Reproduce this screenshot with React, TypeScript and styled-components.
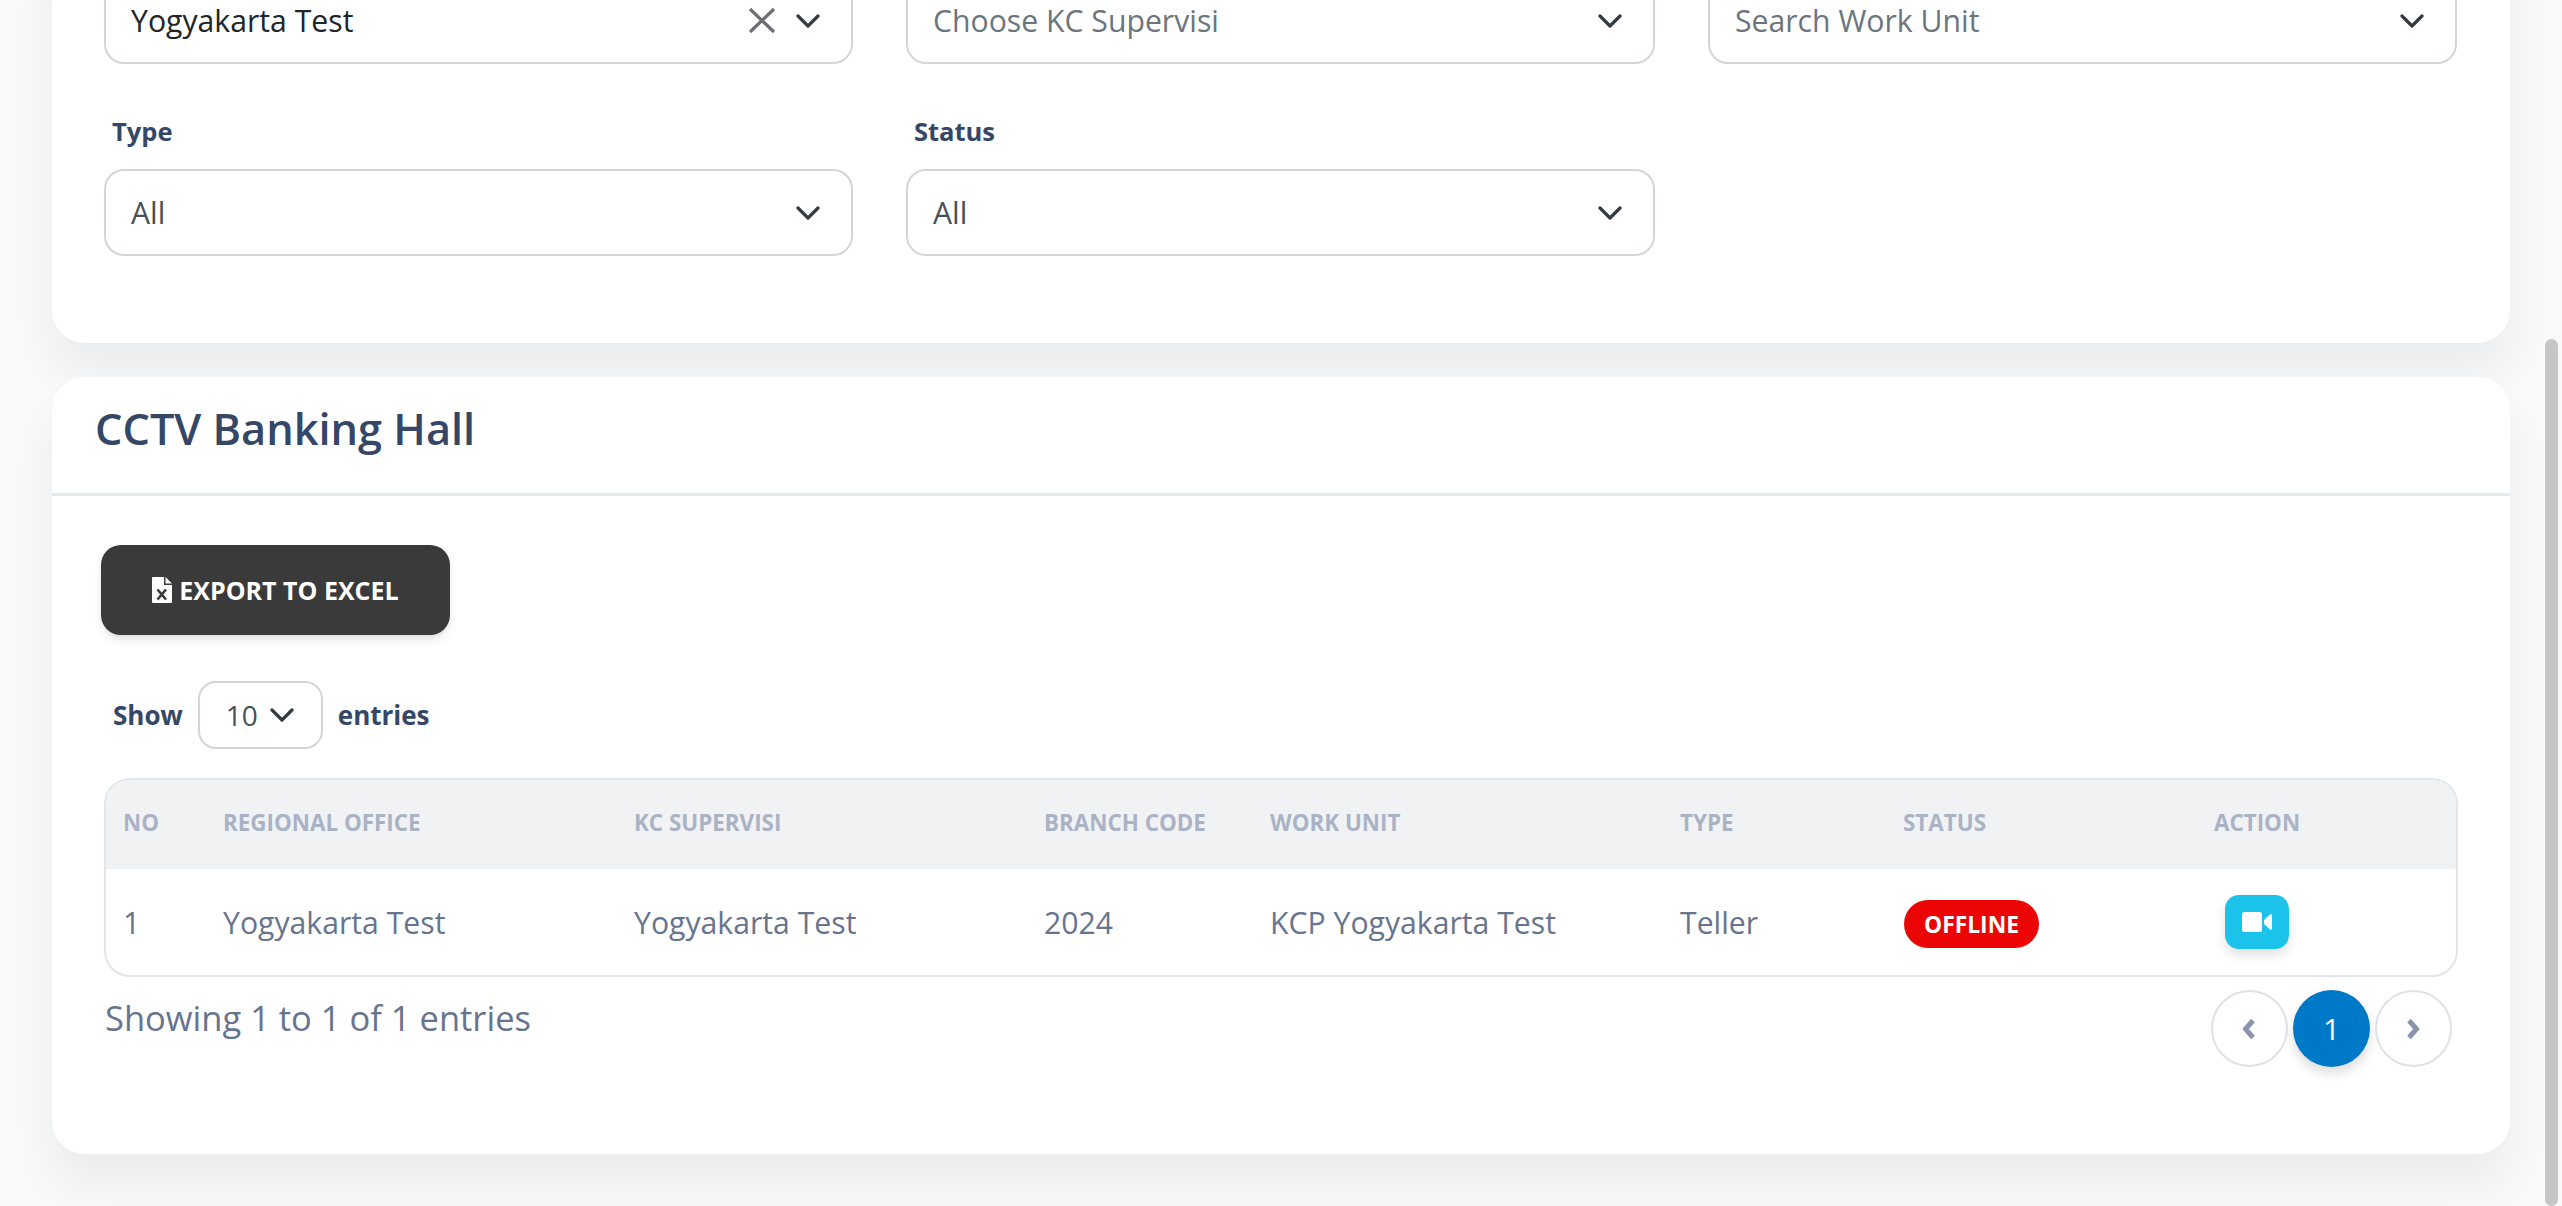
import styled, { createGlobalStyle } from 'styled-components'

const GlobalStyle = createGlobalStyle`
  html, body {
    margin: 0;
    padding: 0;
    background: #f8f9fa;
    font-family: 'Open Sans', 'Liberation Sans', sans-serif;
  }
`

// the reference is scrolled to the end of the page, so the column is pinned to the bottom
const Page = styled.div`
  box-sizing: border-box;
  display: flex;
  flex-direction: column;
  gap: 34px;
  height: 100vh;
  justify-content: flex-end;
  overflow: hidden;
  padding: 0 52px 52px;
  position: relative;
`
const ScrollThumb = styled.div`
  background: #c6c6c6;
  border-radius: 7px;
  bottom: 0;
  position: absolute;
  right: 4px;
  top: 339px;
  width: 13px;
`
const Card = styled.section`
  background: #fff;
  border-radius: 33px;
  box-shadow: 0 32px 43px rgba(0, 0, 0, 0.05);
  flex: none;
`
const FilterBody = styled.div`
  display: grid;
  grid-template-columns: repeat(3, 1fr);
  column-gap: 53px;
  row-gap: 49px;
  padding: 52px 53px 87px 52px;
`
const Field = styled.div`
  display: flex;
  flex-direction: column;
  gap: 20px;
`
const Label = styled.label`
  color: #344767;
  font-size: 25.500px;
  font-weight: 700;
  line-height: 36px;
  padding-left: 8px;
`
const SelectBox = styled.div`
  align-items: center;
  background: #fff;
  border: 2px solid #d2d6da;
  border-radius: 20px;
  box-sizing: border-box;
  display: flex;
  height: 87px;
  padding: 0 31px 0 25px;
`
const SelectValue = styled.span<{ $tone: 'value' | 'muted' | 'placeholder' }>`
  color: ${({ $tone }) => ($tone === 'value' ? '#212529' : $tone === 'muted' ? '#495057' : '#6c757d')};
  flex: 1;
  font-size: 30.200px;
  font-weight: 400;
`
const ClearIcon = styled.svg`
  height: 27px;
  margin-right: 20px;
  width: 28px;
`
const ChevronDown = styled.svg`
  flex: none;
  height: 14px;
  width: 24px;
`
const CardHeader = styled.header`
  border-bottom: 3px solid #e4e9f2;
  padding: 16px 43px 28px;
`
const Title = styled.h2`
  color: #344767;
  font-size: 43.300px;
  font-weight: 600;
  line-height: 72px;
  margin: 0;
`
const CardBody = styled.div`
  padding: 49px 52px 87px 49px;
`
const ExportButton = styled.button`
  align-items: center;
  background: #3a3a3a;
  border: 0;
  border-radius: 20px;
  box-shadow: 0 6px 11px -2px rgba(0, 0, 0, 0.11), 0 3px 6px -2px rgba(0, 0, 0, 0.07);
  color: #fff;
  display: flex;
  font-family: inherit;
  font-size: 25px;
  font-weight: 700;
  gap: 7px;
  height: 90px;
  justify-content: center;
  width: 349px;
`
const LengthRow = styled.div`
  align-items: center;
  color: #344767;
  display: flex;
  font-size: 26px;
  font-weight: 700;
  gap: 15px;
  margin-top: 46px;
  padding-left: 12px;
`
const LengthSelect = styled.div`
  align-items: center;
  border: 2px solid #d2d6da;
  border-radius: 18px;
  box-sizing: border-box;
  color: #495057;
  display: flex;
  font-size: 28px;
  font-weight: 400;
  gap: 12px;
  height: 68px;
  padding-left: 26px;
  width: 125px;
`
const TableWrap = styled.div`
  border: 2px solid #e2e6ec;
  border-radius: 26px;
  margin: 29px 0 0 3px;
  overflow: hidden;
`
const Table = styled.table`
  border-collapse: collapse;
  table-layout: fixed;
  width: 100%;
`
const HeadCell = styled.th<{ $width: number }>`
  background: #f1f2f4;
  box-sizing: border-box;
  color: #aab3c6;
  font-size: 22.400px;
  font-weight: 700;
  height: 89px;
  padding: 0 0 4px 17px;
  text-align: left;
  text-transform: uppercase;
  width: ${({ $width }) => $width}px;
`
const BodyCell = styled.td`
  box-sizing: border-box;
  color: #67748e;
  font-size: 30.200px;
  height: 106px;
  padding: 0 0 0 17px;
`
const Badge = styled.span`
  align-items: center;
  background: #eb0505;
  border-radius: 24px;
  color: #fff;
  display: flex;
  font-size: 22.800px;
  font-weight: 700;
  height: 48px;
  justify-content: center;
  margin: 4px 0 0 1px;
  width: 135px;
`
const VideoButton = styled.button`
  align-items: center;
  background: #1bc3ea;
  border: 0;
  border-radius: 14px;
  box-shadow: 0 6px 12px rgba(0, 0, 0, 0.12);
  display: flex;
  height: 54px;
  justify-content: center;
  margin-left: 11px;
  padding: 0;
  width: 64px;
`
const Footer = styled.div`
  align-items: flex-start;
  display: flex;
  justify-content: space-between;
  margin: 13px 6px 0 4px;
`
const Info = styled.div`
  color: #67748e;
  font-size: 34.500px;
  line-height: 56px;
`
const Pagination = styled.nav`
  display: flex;
  gap: 5px;
`
const PageButton = styled.button<{ $active?: boolean }>`
  align-items: center;
  background: ${({ $active }) => ($active ? '#0078c8' : '#fff')};
  border: ${({ $active }) => ($active ? '0' : '2px solid #dee2e8')};
  border-radius: 50%;
  box-shadow: ${({ $active }) => ($active ? '0 6px 12px rgba(0, 0, 0, 0.14)' : 'none')};
  box-sizing: border-box;
  color: #fff;
  display: flex;
  font-family: inherit;
  font-size: 30px;
  height: 77px;
  justify-content: center;
  padding: 0;
  width: 77px;
`

const COLUMNS = [
  { label: 'No', width: 100 },
  { label: 'Regional Office', width: 411 },
  { label: 'KC Supervisi', width: 410 },
  { label: 'Branch Code', width: 226 },
  { label: 'Work Unit', width: 410 },
  { label: 'Type', width: 223 },
  { label: 'Status', width: 311 },
  { label: 'Action', width: 259 },
]

const Chevron = () => (
  <ChevronDown viewBox="0 0 24 14">
    <path d="M2 2l10 10L22 2" fill="none" stroke="#343a40" strokeWidth="3.200" strokeLinecap="round" strokeLinejoin="round" />
  </ChevronDown>
)

const Select = ({
  value,
  tone,
  clearable,
}: {
  value: string
  tone: 'value' | 'muted' | 'placeholder'
  clearable?: boolean
}) => (
  <SelectBox>
    <SelectValue $tone={tone}>{value}</SelectValue>
    {clearable && (
      <ClearIcon viewBox="0 0 28 27">
        <path d="M2 2l24 23M26 2L2 25" fill="none" stroke="#6b6e72" strokeWidth="3.200" />
      </ClearIcon>
    )}
    <Chevron />
  </SelectBox>
)

const ExcelIcon = () => (
  <svg width="20" height="26" viewBox="0 0 20 26">
    <path d="M1 0h11v8h8v17a1 1 0 0 1-1 1H1a1 1 0 0 1-1-1V1a1 1 0 0 1 1-1z" fill="#fff" />
    <path d="M13.500 0L20 6.500h-6.500z" fill="#fff" />
    <path d="M5.500 12.500l8.500 10M14 12.500l-8.500 10" stroke="#3a3a3a" strokeWidth="2.600" fill="none" />
  </svg>
)

const VideoIcon = () => (
  <svg width="30" height="20" viewBox="0 0 30 20">
    <rect width="20" height="20" rx="2.500" fill="#fff" />
    <path d="M22 8l6-5.500c.8-.6 2-.2 2 1v13c0 1.200-1.200 1.600-2 1L22 12z" fill="#fff" />
  </svg>
)

const PageChevron = ({ dir }: { dir: 'left' | 'right' }) => (
  <svg width="14" height="22" viewBox="0 0 14 22">
    <path
      d={dir === 'left' ? 'M10 2.500L2.500 11l7.500 8.500' : 'M2 2.500L9.500 11 2 19.500'}
      fill="none"
      stroke="#8a94ad"
      strokeWidth="5"
    />
  </svg>
)

export default function App() {
  return (
    <>
      <GlobalStyle />
      <Page>
        <Card>
          <FilterBody>
            <Field>
              <Select value="Yogyakarta Test" tone="value" clearable />
            </Field>
            <Field>
              <Select value="Choose KC Supervisi" tone="placeholder" />
            </Field>
            <Field>
              <Select value="Search Work Unit" tone="placeholder" />
            </Field>
            <Field>
              <Label>Type</Label>
              <Select value="All" tone="muted" />
            </Field>
            <Field>
              <Label>Status</Label>
              <Select value="All" tone="muted" />
            </Field>
          </FilterBody>
        </Card>
        <Card>
          <CardHeader>
            <Title>CCTV Banking Hall</Title>
          </CardHeader>
          <CardBody>
            <ExportButton>
              <ExcelIcon />
              EXPORT TO EXCEL
            </ExportButton>
            <LengthRow>
              Show
              <LengthSelect>
                10
                <Chevron />
              </LengthSelect>
              entries
            </LengthRow>
            <TableWrap>
              <Table>
                <thead>
                  <tr>
                    {COLUMNS.map(col => (
                      <HeadCell key={col.label} $width={col.width}>
                        {col.label}
                      </HeadCell>
                    ))}
                  </tr>
                </thead>
                <tbody>
                  <tr>
                    <BodyCell>1</BodyCell>
                    <BodyCell>Yogyakarta Test</BodyCell>
                    <BodyCell>Yogyakarta Test</BodyCell>
                    <BodyCell>2024</BodyCell>
                    <BodyCell>KCP Yogyakarta Test</BodyCell>
                    <BodyCell>Teller</BodyCell>
                    <BodyCell>
                      <Badge>OFFLINE</Badge>
                    </BodyCell>
                    <BodyCell>
                      <VideoButton>
                        <VideoIcon />
                      </VideoButton>
                    </BodyCell>
                  </tr>
                </tbody>
              </Table>
            </TableWrap>
            <Footer>
              <Info>Showing 1 to 1 of 1 entries</Info>
              <Pagination>
                <PageButton>
                  <PageChevron dir="left" />
                </PageButton>
                <PageButton $active>1</PageButton>
                <PageButton>
                  <PageChevron dir="right" />
                </PageButton>
              </Pagination>
            </Footer>
          </CardBody>
        </Card>
        <ScrollThumb />
      </Page>
    </>
  )
}
